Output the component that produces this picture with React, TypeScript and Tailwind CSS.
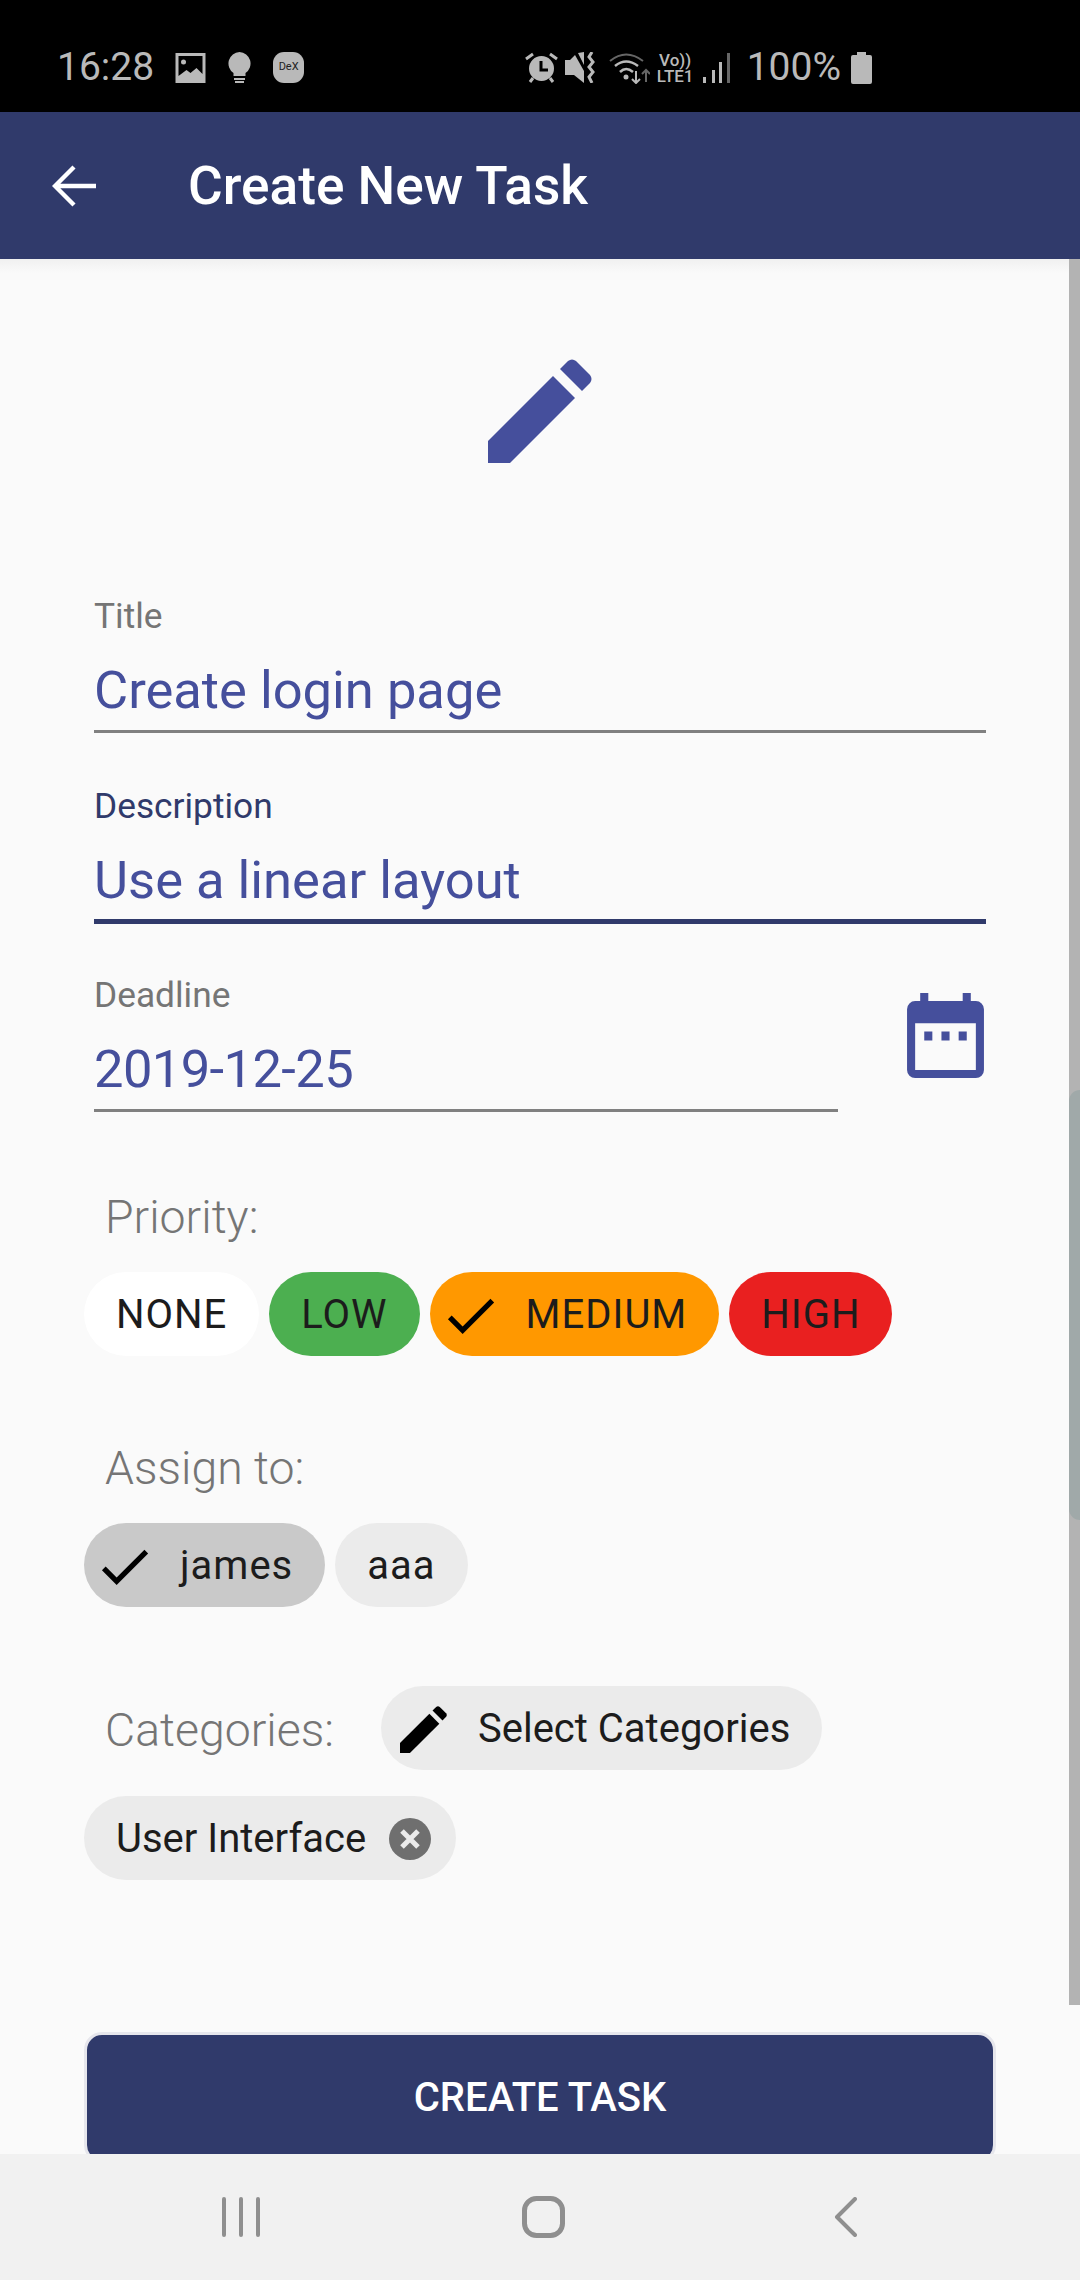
const font = { fontFamily: "Roboto, sans-serif" };

const PencilIcon = ({ className }: { className: string }) => (
  <svg viewBox="0 0 104 104" className={className}>
    <path d="M0 104V82L65 17L87 39L22 104Z" fill="currentColor" />
    <path d="M72 10L80 2Q84 -1 88 2L102 16Q105 20 102 24L94 32Z" fill="currentColor" />
  </svg>
);

const CheckIcon = () => (
  <svg viewBox="0 0 24 24" className="mr-[24px] h-[63px] w-[63px] shrink-0 text-black">
    <path d="M9 16.17L4.83 12l-1.42 1.41L9 19 21 7l-1.41-1.41z" fill="currentColor" />
  </svg>
);

const StatusBar = () => (
  <div className="flex h-[112px] shrink-0 items-center justify-between bg-black pl-[57px] pr-[208px] pt-[23px] text-[#b9b9b9]">
    <div className="flex items-center">
      <span className="text-[39px] leading-none">16:28</span>
      <svg viewBox="0 0 30 30" className="ml-[21px] h-[30px] w-[31px]">
        <path d="M0 0h30v30H0z" fill="currentColor" />
        <path d="M3 3h24v18l-6-6-6 5-4-3-8 6z" fill="#000" />
        <circle cx="8" cy="9" r="2.5" fill="currentColor" />
      </svg>
      <svg viewBox="0 0 23 31" className="ml-[22px] h-[31px] w-[23px]">
        <path d="M11.5 0a11.5 11.5 0 0 1 6 21v3H5.5v-3a11.5 11.5 0 0 1 6-21z" fill="currentColor" />
        <path d="M6 26h11v2H6zM7 29h9v2H7z" fill="currentColor" />
      </svg>
      <div className="ml-[22px] flex h-[31px] w-[31px] items-center justify-center rounded-[11px] bg-[#b9b9b9] text-[11px] text-[#222]">
        DeX
      </div>
    </div>
    <div className="flex items-center">
      <svg viewBox="0 0 33 31" className="h-[31px] w-[33px]">
        <circle cx="16.5" cy="16.5" r="12.5" fill="currentColor" />
        <path d="M16 9v9h7" stroke="#000" strokeWidth="3" fill="none" />
        <path d="M1 7l7-5M32 7l-7-5M5 30l3-4M28 30l-3-4" stroke="currentColor" strokeWidth="3" />
      </svg>
      <svg viewBox="0 0 31 31" className="ml-[7px] h-[31px] w-[31px]">
        <path d="M0 8h5l5-5 9 16v12l-10-8H0zM13 1l6-1v13z" fill="currentColor" />
        <path d="M27 0l-3 5 4 5-4 5 4 5-4 5 3 6" stroke="currentColor" strokeWidth="3" fill="none" />
      </svg>
      <svg viewBox="0 0 41 32" className="ml-[13px] h-[32px] w-[41px]">
        <path d="M1 9Q17 -4 34 9" stroke="#666" strokeWidth="2" fill="none" />
        <path d="M6 14Q17 5 29 14M11 20Q17 14 24 20" stroke="currentColor" strokeWidth="2.5" fill="none" />
        <circle cx="17" cy="25" r="2.5" fill="currentColor" />
        <path d="M27 19v12M23 27l4 4 4-4" stroke="currentColor" strokeWidth="2" fill="none" />
        <path d="M37 30V18M33 22l4-4 4 4" stroke="#666" strokeWidth="2" fill="none" />
      </svg>
      <div className="ml-[6px] flex w-[39px] flex-col items-center text-[17px] font-medium leading-[16px]">
        <span>Vo))</span>
        <span>LTE1</span>
      </div>
      <svg viewBox="0 0 27 30" className="ml-[8px] h-[30px] w-[27px]">
        <path d="M0 24h3v6H0zM9 17h3v13H9zM16 9h3v21h-3z" fill="currentColor" />
        <path d="M24 0h3v30h-3z" fill="#666" />
      </svg>
      <span className="ml-[17px] text-[39px] leading-none">100%</span>
      <svg viewBox="0 0 21 32" className="ml-[10px] h-[32px] w-[21px]">
        <path d="M6 0h9v3h4a2 2 0 0 1 2 2v25a2 2 0 0 1-2 2H2a2 2 0 0 1-2-2V5a2 2 0 0 1 2-2h4z" fill="currentColor" />
      </svg>
    </div>
  </div>
);

const Field = ({ label, value, focused, tight }: { label: string; value: string; focused?: boolean; tight?: boolean }) => (
  <div className="min-w-0 flex-1">
    <div className={`text-[35.3px] leading-[41px] ${focused ? "text-[#303a6b]" : "text-[#757575]"}`}>{label}</div>
    <div className={`mt-[22px] text-[52.5px] leading-[62px] text-[#454f9c] ${tight ? "tracking-[-0.6px]" : ""}`}>{value}</div>
    {focused ? (
      <div className="mt-[8px] h-[5px] bg-[#303a6b]" />
    ) : (
      <div className="mb-[2px] mt-[9px] h-[3px] bg-[#808080]" />
    )}
  </div>
);

const Chip = ({ label, bg, checked }: { label: string; bg: string; checked?: boolean }) => (
  <div
    className={`flex h-[84px] items-center rounded-full pt-[2px] text-[40px] tracking-[1px] text-[#1c1c1c] ${bg} ${checked ? "pl-[9px] pr-[32px]" : "px-[32px]"}`}
  >
    {checked && <CheckIcon />}
    {label}
  </div>
);

const SectionLabel = ({ children }: { children: string }) => (
  <div className="text-[46.4px] font-light leading-[54px] text-[#757575]">{children}</div>
);

export default function App() {
  return (
    <div className="flex h-[2280px] w-[1080px] flex-col overflow-hidden bg-[#fafafa]" style={font}>
      <StatusBar />
      <div className="flex h-[147px] shrink-0 items-center bg-[#303a6b] text-white">
        <svg viewBox="0 0 44 42" className="ml-[52px] h-[42px] w-[44px]">
          <path d="M44 21H3M22 2L3 21l19 19" stroke="currentColor" strokeWidth="4.4" fill="none" />
        </svg>
        <span className="ml-[92px] pt-[2px] text-[53.2px] font-medium">Create New Task</span>
      </div>

      <div className="relative min-h-0 flex-1 overflow-hidden">
        <div className="absolute inset-x-0 top-0 h-[14px] bg-gradient-to-b from-[#f0f0f0] to-[#fafafa]" />
        <div className="absolute right-0 top-0 h-[1746px] w-[11px] bg-[#b3b3b3]" />
        <div className="absolute right-0 top-[831px] h-[430px] w-[11px] rounded-l-[12px] bg-[#a0a9a9]" />

        <div className="relative flex flex-col pt-[100px]">
          <PencilIcon className="mx-auto h-[104px] w-[104px] text-[#454f9c]" />

          <div className="mt-[133px] flex flex-col gap-[51px] pl-[94px] pr-[94px]">
            <Field label="Title" value="Create login page" />
            <Field label="Description" value="Use a linear layout" focused />
            <div className="flex items-start">
              <div className="w-[744px]">
                <Field label="Deadline" value="2019-12-25" tight />
              </div>
              <svg viewBox="0 0 76 84" className="ml-[69px] mt-[18px] h-[85px] w-[77px] text-[#454f9c]">
                <path d="M13 0h8v8h34V0h8v8h5a8 8 0 0 1 8 8v60a8 8 0 0 1-8 8H8a8 8 0 0 1-8-8V16a8 8 0 0 1 8-8h5z" fill="currentColor" />
                <path d="M8 30h60v46H8z" fill="#fafafa" />
                <path d="M17 38h8v9h-8zM34 38h8v9h-8zM51 38h8v9h-8z" fill="currentColor" />
              </svg>
            </div>
          </div>

          <div className="mt-[76px] pl-[105px]">
            <SectionLabel>Priority:</SectionLabel>
          </div>
          <div className="mt-[28px] flex gap-[10px] pl-[84px]">
            <Chip label="NONE" bg="bg-white" />
            <Chip label="LOW" bg="bg-[#4caf50]" />
            <Chip label="MEDIUM" bg="bg-[#ff9800]" checked />
            <Chip label="HIGH" bg="bg-[#e92020]" />
          </div>

          <div className="mt-[85px] pl-[105px]">
            <SectionLabel>Assign to:</SectionLabel>
          </div>
          <div className="mt-[28px] flex gap-[10px] pl-[84px]">
            <Chip label="james" bg="bg-[#c9c9c9]" checked />
            <Chip label="aaa" bg="bg-[#ebebeb]" />
          </div>

          <div className="mt-[79px] flex items-center pl-[105px]">
            <div className="pt-[4px]">
              <SectionLabel>Categories:</SectionLabel>
            </div>
            <div className="ml-[47px] flex h-[84px] items-center rounded-full bg-[#ebebeb] pl-[19px] pr-[32px] pt-[2px] text-[40px] text-[#1c1c1c]">
              <PencilIcon className="mr-[31px] h-[47px] w-[47px] text-black" />
              Select Categories
            </div>
          </div>
          <div className="mt-[26px] flex pl-[84px]">
            <div className="flex h-[84px] items-center rounded-full bg-[#ebebeb] pl-[32px] pr-[25px] pt-[2px] text-[40px] text-[#1c1c1c]">
              User Interface
              <svg viewBox="0 0 42 42" className="ml-[23px] h-[42px] w-[42px]">
                <circle cx="21" cy="21" r="21" fill="#6f6f6f" />
                <path d="M13 13l16 16M29 13L13 29" stroke="#ebebeb" strokeWidth="5" />
              </svg>
            </div>
          </div>

          <div className="mx-[84px] mt-[152px] flex h-[131px] items-center justify-center rounded-[18px] border-[3px] border-[#e6e6ec] bg-[#303a6b] text-[40px] font-medium text-white">
            CREATE TASK
          </div>
        </div>
      </div>

      <div className="relative flex h-[126px] shrink-0 items-center bg-[#f1f1f1] text-[#8f8f8f]">
        <svg viewBox="0 0 38 40" className="ml-[222px] h-[40px] w-[38px]">
          <path d="M2 2v36M19 2v36M36 2v36" stroke="currentColor" strokeWidth="4" strokeLinecap="round" />
        </svg>
        <svg viewBox="0 0 43 42" className="ml-[262px] h-[42px] w-[43px]">
          <rect x="2.5" y="2.5" width="38" height="37" rx="12" stroke="currentColor" strokeWidth="5" fill="none" />
        </svg>
        <svg viewBox="0 0 23 40" className="ml-[269px] h-[40px] w-[23px]">
          <path d="M21 2L3 20l18 18" stroke="currentColor" strokeWidth="4" strokeLinecap="round" strokeLinejoin="round" fill="none" />
        </svg>
      </div>
    </div>
  );
}
